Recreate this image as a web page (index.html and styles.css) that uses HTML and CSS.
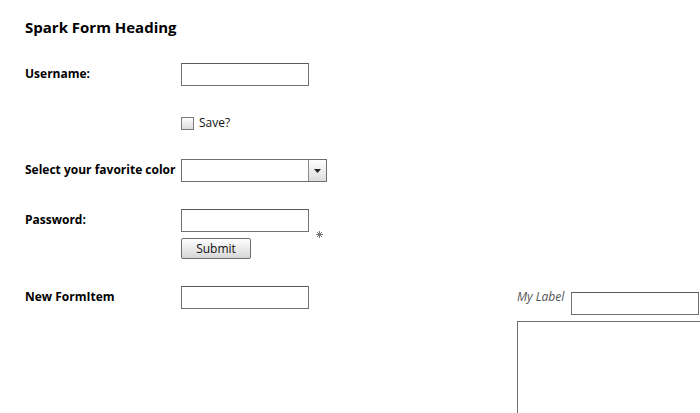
FILE: index.html
```html
<!DOCTYPE html>
<html>
<head>
<meta charset="utf-8">
<link rel="stylesheet" href="styles.css">
</head>
<body>
<form class="form">
  <h1 class="heading">Spark Form Heading</h1>
  <div class="row row-user">
    <label class="lbl">Username:</label>
    <div class="field"><span class="input"></span></div>
  </div>
  <div class="row row-save">
    <span></span>
    <div class="field check"><span class="box"></span><span class="check-text">Save?</span></div>
  </div>
  <div class="row row-color">
    <label class="lbl">Select your favorite color</label>
    <div class="field"><span class="select"><span class="select-text"></span><span class="select-btn"><svg width="7" height="4" viewBox="0 0 7 4"><path d="M0 0H7L3.5 4Z" fill="#222"/></svg></span></span></div>
  </div>
  <div class="row row-pass">
    <label class="lbl">Password:</label>
    <div class="field pass">
      <div class="pass-col">
        <span class="input"></span>
        <button type="button" class="btn">Submit</button>
      </div>
      <svg class="req" width="7" height="7" viewBox="0 0 7 7"><g stroke="#777" stroke-width="1"><path d="M3.5 0V7M0 3.5H7M1 1L6 6M6 1L1 6"/></g></svg>
    </div>
  </div>
  <div class="row row-new">
    <label class="lbl">New FormItem</label>
    <div class="field new">
      <span class="input"></span>
      <div class="side">
        <div class="side-top"><span class="my-label">My Label</span><span class="input"></span></div>
        <span class="area"></span>
      </div>
    </div>
  </div>
</form>
</body>
</html>
```
FILE: styles.css
```css
html, body { margin: 0; padding: 0; background: #fff; overflow: hidden; }
body { width: 700px; height: 413px; font-family: "Open Sans", "DejaVu Sans", sans-serif; color: #000; }
.form { padding: 16px 0 0 25px; }
.heading { margin: 0; font-size: 15px; font-weight: 700; line-height: 22px; height: 22px; letter-spacing: 0; }
.row { display: grid; grid-template-columns: 156px auto; align-items: start; }
.lbl { font-size: 12px; font-weight: 700; line-height: 16px; padding-top: 3px; white-space: nowrap; }
.row-user { margin-top: 25px; }
.row-save { margin-top: 30px; }
.row-color { margin-top: 29px; }
.row-pass { margin-top: 27px; }
.row-new { margin-top: 27px; }
.input { display: block; box-sizing: border-box; width: 128px; height: 23px; border: 1px solid #727272; border-top-color: #5a5a5a; background: #fff; }
.check { display: flex; align-items: center; height: 14px; }
.box { display: block; box-sizing: border-box; width: 13px; height: 13px; border: 1px solid #7a7a7a; background: linear-gradient(#fdfdfd, #dcdcdc); }
.check-text { font-size: 12px; margin-left: 5px; line-height: 14px; color: #111; }
.select { display: flex; box-sizing: border-box; width: 146px; height: 23px; border: 1px solid #6e6e6e; background: #fff; }
.select-text { flex: 1; }
.select-btn { width: 18px; border-left: 1px solid #8a8a8a; background: linear-gradient(#fefefe, #dedede); display: flex; align-items: center; justify-content: center; padding-top: 1px; box-sizing: border-box; }
.pass { display: flex; align-items: flex-start; }
.pass-col { display: flex; flex-direction: column; gap: 6px; }
.btn { box-sizing: border-box; width: 70px; height: 21px; margin: 0; padding: 0; border: 1px solid #6e6e6e; border-radius: 2px; background: linear-gradient(#ffffff, #d6d6d6); font-family: "Open Sans", sans-serif; font-size: 12px; line-height: 18px; color: #111; }
.req { margin-left: 7px; margin-top: 22px; }
.new { display: flex; align-items: flex-start; }
.side { margin-left: 208px; margin-top: 6px; display: flex; flex-direction: column; gap: 6px; }
.side-top { display: flex; align-items: flex-start; gap: 6px; }
.my-label { font-size: 12px; font-style: italic; color: #555; line-height: 16px; margin-top: -3px; width: 48px; }
.area { display: block; box-sizing: border-box; width: 183px; height: 93px; border: 1px solid #6e6e6e; border-right: 0; border-bottom: 0; }
```
